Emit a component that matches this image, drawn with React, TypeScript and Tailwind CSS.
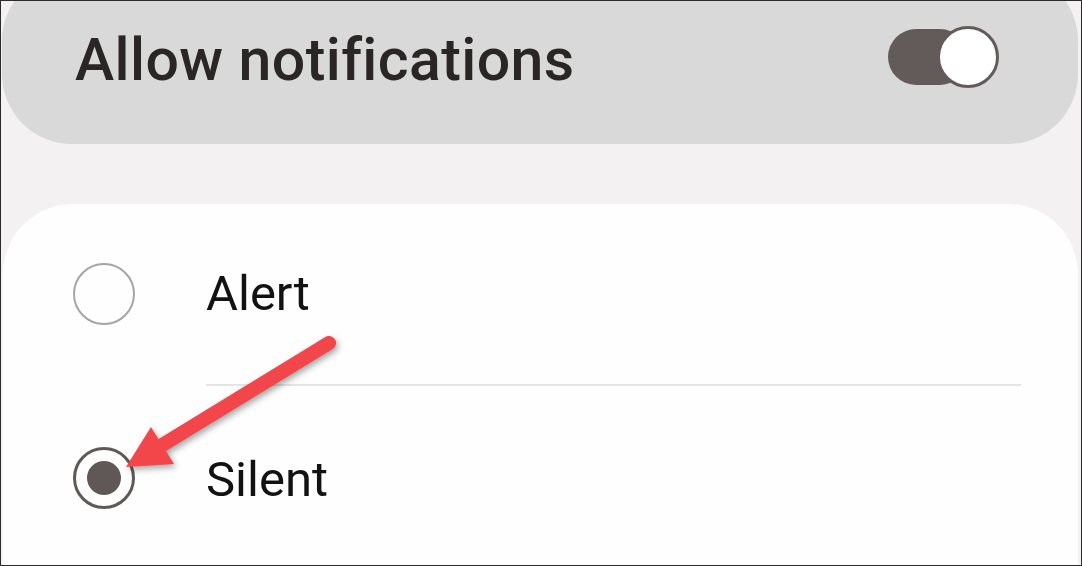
import React from "react";

export default function App() {
  return (
    <div
      className="relative w-[1082px] h-[566px] overflow-hidden border border-[#2b2b2b] bg-[#f3f1f2] flex flex-col"
      style={{ fontFamily: "Roboto, 'Noto Sans', sans-serif" }}
    >
      {/* Top card */}
      <div className="-mt-[30px] ml-[1px] mr-[3px] h-[173px] shrink-0 rounded-[70px] bg-[#d9d9d9] flex items-center justify-between pl-[73px] pr-[80px]">
        <div className="pt-[4px] text-[59px] leading-none font-medium text-[#2a2625] tracking-[0.4px]">
          Allow notifications
        </div>
        <div className="relative w-[111px] h-[62px] -mt-[2px] mr-[-1px] flex items-center">
          <div className="absolute left-0 top-[3px] w-[80px] h-[56px] rounded-full bg-[#635b59]" />
          <div className="absolute right-0 top-0 w-[62px] h-[62px] rounded-full bg-white border-[3px] border-[#635b59]" />
        </div>
      </div>

      {/* Bottom card */}
      <div className="mt-[60px] ml-[2px] mr-[3px] flex-1 rounded-t-[70px] bg-[#fefefe] pt-[50px]">
        <div className="flex items-center h-[80px] pl-[70px]">
          <div className="w-[62px] h-[62px] rounded-full border-[2.5px] border-[#a6a5a5]" />
          <div className="ml-[71px] text-[49px] leading-none text-[#121212] pb-[1px]">Alert</div>
        </div>
        <div className="mt-[50px] ml-[203px] mr-[57px] h-[2px] bg-[#e6e4e4]" />
        <div className="mt-[52px] flex items-center h-[80px] pl-[70px]">
          <div className="w-[62px] h-[62px] rounded-full border-[3px] border-[#5f5857] flex items-center justify-center">
            <div className="w-[34px] h-[34px] rounded-full bg-[#5f5857]" />
          </div>
          <div className="ml-[71px] text-[49px] leading-none text-[#121212] pt-[2px]">Silent</div>
        </div>
      </div>

      {/* Arrow overlay */}
      <svg
        className="absolute left-0 top-0 pointer-events-none"
        width="1082"
        height="566"
        viewBox="0 0 1082 566"
        style={{ filter: "drop-shadow(2px 3px 3px rgba(0,0,0,0.35))" }}
      >
        <line x1="328" y1="342" x2="158" y2="446" stroke="#f2464b" strokeWidth="14" strokeLinecap="round" />
        <polygon points="125,466 150,426 173,463" fill="#f2464b" />
      </svg>
    </div>
  );
}
